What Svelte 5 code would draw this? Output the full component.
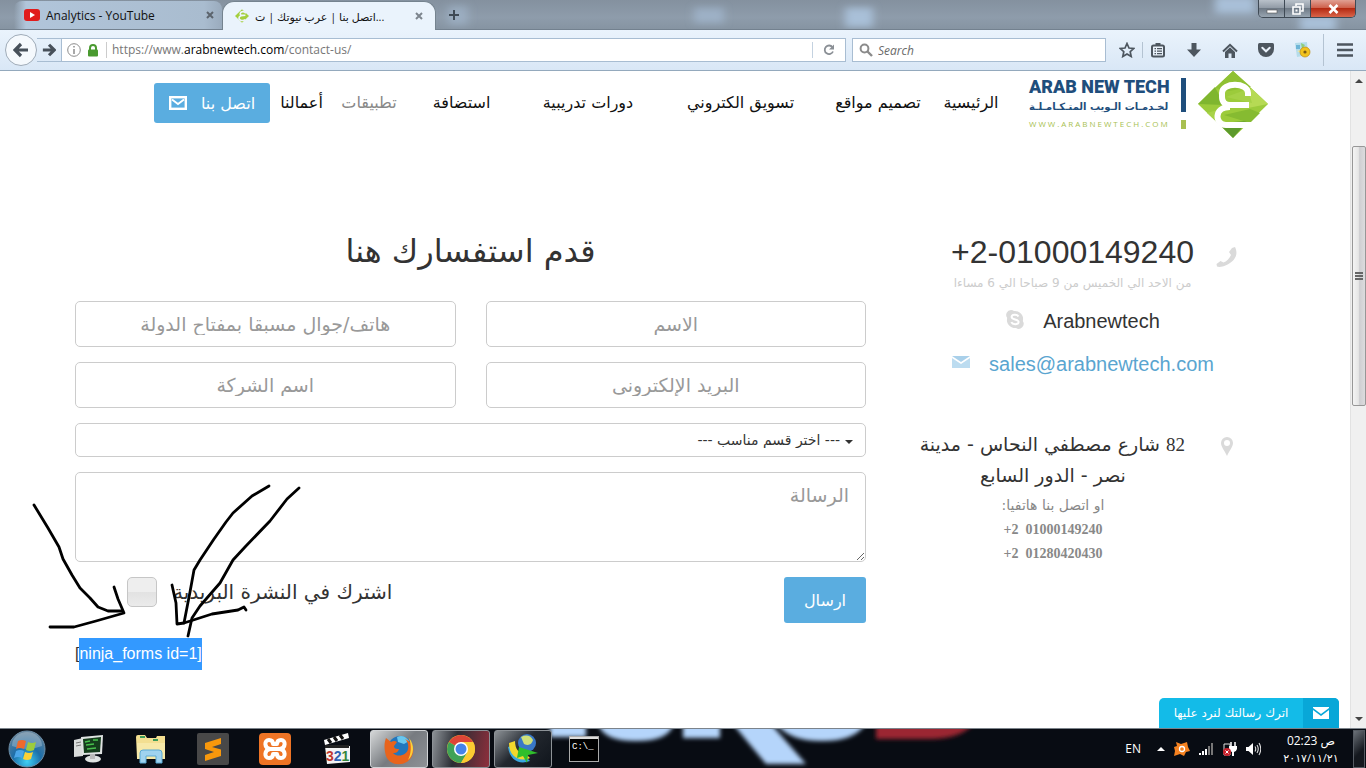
<script>
  const nav = ['الرئيسية', 'تصميم مواقع', 'تسويق الكتروني', 'دورات تدريبية', 'استضافة', 'تطبيقات', 'أعمالنا'];
  const muted = 'تطبيقات';
</script>

<div class="screen">
  <div class="tabstrip">
    <svg class="wall" viewBox="0 0 1366 30" preserveAspectRatio="none" aria-hidden="true">
      <g filter="url(#soft)" fill="#a9c0d8">
        <rect x="448" y="6" width="20" height="20" opacity=".5" />
        <rect x="694" y="8" width="30" height="16" opacity=".6" />
        <rect x="845" y="8" width="28" height="20" />
        <rect x="1215" y="-4" width="40" height="18" />
        <rect x="1300" y="16" width="36" height="16" />
      </g>
      <defs><filter id="soft"><feGaussianBlur stdDeviation="4" /></filter></defs>
    </svg>
    <div class="tab back">
      <svg width="16" height="12" viewBox="0 0 16 12"><rect width="16" height="12" rx="3" fill="#e11b1b" /><path d="M6 3v6l5-3z" fill="#fff" /></svg>
      <span class="ttl">Analytics - YouTube</span>
      <button class="x" aria-label="Close tab"><svg width="8" height="8" viewBox="0 0 8 8"><path d="M1 1l6 6M7 1L1 7" stroke="#5c646d" stroke-width="2" /></svg></button>
    </div>
    <div class="tab front">
      <svg width="14" height="14" viewBox="0 0 70 68"><path d="M35 0L70 34 35 68 0 34z" fill="#a4cf3e" /><path d="M54 20C46 8 28 10 26 22s18 8 26 8c-22 0-32 6-32 14 0 14 22 16 32 8" fill="none" stroke="#eef5fd" stroke-width="8" /></svg>
      <span class="ttl" dir="rtl">...اتصل بنا | عرب نيوتك | ت</span>
      <button class="x" aria-label="Close tab"><svg width="8" height="8" viewBox="0 0 8 8"><path d="M1 1l6 6M7 1L1 7" stroke="#7d858e" stroke-width="2" /></svg></button>
    </div>
    <button class="plus" aria-label="New tab"><svg width="10" height="10" viewBox="0 0 10 10"><path d="M5 0v10M0 5h10" stroke="#3f4a55" stroke-width="2" /></svg></button>
    <div class="winbtns">
      <button aria-label="Minimize"><svg width="12" height="12" viewBox="0 0 12 12"><rect x="1" y="7" width="10" height="3" fill="#fff" stroke="#555" stroke-width=".6" /></svg></button>
      <button aria-label="Restore"><svg width="12" height="12" viewBox="0 0 12 12"><path d="M4 3V1h7v7H9M1 4h7v7H1z" fill="none" stroke="#fff" stroke-width="1.600" /><path d="M3.500 6.500h2v2h-2z" fill="#fff" /></svg></button>
      <button class="close" aria-label="Close"><svg width="11" height="10" viewBox="0 0 11 10"><path d="M1.500 1l8 8M9.500 1l-8 8" stroke="#fff" stroke-width="2.600" /></svg></button>
    </div>
  </div>

  <div class="toolbar">
    <div class="navbtns">
      <button class="bk" aria-label="Back"><svg width="16" height="16" viewBox="0 0 16 16"><path d="M8 2L2 8l6 6M2.500 8H15" fill="none" stroke="#47505a" stroke-width="3.200" /></svg></button>
      <button class="fw" aria-label="Forward"><svg width="14" height="14" viewBox="0 0 16 16"><path d="M8 2l6 6-6 6M13.500 8H1" fill="none" stroke="#47505a" stroke-width="3.600" /></svg></button>
    </div>
    <div class="url">
      <svg width="14" height="14" viewBox="0 0 14 14"><circle cx="7" cy="7" r="6.300" fill="none" stroke="#8c8c8c" /><path d="M7 6v5M7 3v1.600" stroke="#8c8c8c" stroke-width="1.500" /></svg>
      <svg class="lock" width="12" height="13" viewBox="0 0 12 13"><path d="M3 7V4a3 3 0 016 0v3" fill="none" stroke="#4a9a30" stroke-width="2" /><rect x="1" y="5.500" width="10" height="7" rx="1" fill="#4a9a30" /></svg>
      <div class="addr" role="textbox" tabindex="0" aria-label="Address">https://www.<b>arabnewtech.com</b>/contact-us/</div>
      <button class="reload" aria-label="Reload"><svg width="12" height="12" viewBox="0 0 12 12"><path d="M9.500 3.200A4.300 4.300 0 1010 7.500" fill="none" stroke="#8a8f95" stroke-width="1.800" /><path d="M11 .5v5H6z" fill="#8a8f95" /></svg></button>
    </div>
    <div class="search">
      <svg width="14" height="14" viewBox="0 0 14 14"><circle cx="5.500" cy="5.500" r="3.900" fill="none" stroke="#8b8b8b" stroke-width="2" /><path d="M8.500 8.500l4.500 4.500" stroke="#8b8b8b" stroke-width="2.400" /></svg>
      <input type="search" placeholder="Search" aria-label="Search" />
    </div>
    <div class="tools">
      <button aria-label="Bookmark"><svg width="16" height="16" viewBox="0 0 16 16"><path d="M8 1.500l2 4.500 4.700.5-3.500 3.200 1 4.800L8 12l-4.200 2.500 1-4.800L1.300 6.500 6 6z" fill="none" stroke="#4d565f" stroke-width="1.700" /></svg></button>
      <i></i>
      <button aria-label="Bookmarks list"><svg width="14" height="16" viewBox="0 0 14 16"><rect x="1" y="3.500" width="12" height="11" rx="1.500" fill="#eaf2fb" stroke="#4d565f" stroke-width="2" /><path d="M4.500 1h5v3h-5z" fill="#4d565f" /><path d="M3.500 6.700h1.500M6 6.700h5M3.500 9.200h1.500M6 9.200h5M3.500 11.700h1.500M6 11.700h5" stroke="#4d565f" stroke-width="1.200" /></svg></button>
      <button aria-label="Downloads"><svg width="14" height="14" viewBox="0 0 14 14"><path d="M4.500 0h5v6.500H14L7 14 0 6.500h4.500z" fill="#4d565f" /></svg></button>
      <button aria-label="Home"><svg width="16" height="15" viewBox="0 0 16 15"><path d="M1 8.500L8 1.800l7 6.700" fill="none" stroke="#4d565f" stroke-width="2" /><path d="M3 9l5-4.700L13 9v6H9.500v-4.500h-3V15H3z" fill="#4d565f" /></svg></button>
      <button aria-label="Pocket"><svg width="16" height="14" viewBox="0 0 16 14"><path d="M1.500 0h13Q16 0 16 1.500V6a8 8 0 01-16 0V1.500Q0 0 1.500 0z" fill="#4d565f" /><path d="M4.300 4.800L8 8.300l3.700-3.500" fill="none" stroke="#eaf2fb" stroke-width="2" stroke-linecap="round" /></svg></button>
      <button aria-label="Add-on"><svg width="18" height="18" viewBox="0 0 18 18"><path d="M2 2l12-1 1 13-11 2z" fill="#b5dcea" /><path d="M3 4h4v4H3z" fill="#6eb5d6" /><path d="M8 2l4 2-3 4z" fill="#8fce7a" /><path d="M4 10l5-1 1 4z" fill="#f2e9a0" /><circle cx="12" cy="11" r="5" fill="#f2c31d" stroke="#b98a13" stroke-width=".7" /><circle cx="12" cy="11" r="1.600" fill="#7b5b12" /></svg></button>
      <i class="tall"></i>
      <button aria-label="Menu"><svg width="16" height="14" viewBox="0 0 16 14"><path d="M0 1.500h16M0 7h16M0 12.500h16" stroke="#4d565f" stroke-width="2.600" /></svg></button>
    </div>
  </div>

  <div class="view">
    <div class="page" dir="rtl">
      <header>
        <a class="logo" href="#home" aria-label="ARAB NEW TECH">
          <svg width="70" height="68" viewBox="0 0 70 68">
            <path d="M35 0L70 33 35 67 0 33z" fill="#9ccb3b" />
            <path d="M35 0l18 16-22 4-14-3z" fill="#8fc133" /><path d="M0 33l17-17 9 18z" fill="#7fb62f" /><path d="M53 17l17 16-20 4z" fill="#b6da54" />
            <path d="M35 67L20 52l30-2z" fill="#5d9a2c" /><path d="M9 42l11 10 3-14z" fill="#a8d348" /><path d="M28 26l22-8 4 14z" fill="#a6d147" /><path d="M26 44l26-6 10 4-10 10z" fill="#86bb31" />
            <path d="M50 25V22C50 11 24 11 24 22v4c0 5 3 8 8 8h19M32 36C15 36 17 54 28 54h32" fill="none" stroke="#fff" stroke-width="6" />
          </svg>
          <span class="bars"><i></i><i></i></span>
          <span class="words">
            <strong dir="ltr">ARAB NEW TECH</strong>
            <em>لخـدمـات الـويب المتـكـامـلـة</em>
            <small dir="ltr">WWW.ARABNEWTECH.COM</small>
          </span>
        </a>
        <nav>
          {#each nav as item}
            <a href="#{item}" class:muted={item === muted}>{item}</a>
          {/each}
        </nav>
        <a class="cta" href="#contact">اتصل بنا
          <svg width="18" height="14" viewBox="0 0 18 14"><rect x="1.200" y="1.200" width="15.600" height="11.600" fill="none" stroke="#fff" stroke-width="2.400" /><path d="M3 3.500l6 4.500 6-4.500" fill="none" stroke="#fff" stroke-width="1.800" /></svg>
        </a>
      </header>

      <main>
        <aside>
          <section class="phone">
            <svg width="21" height="21" viewBox="0 0 21 21"><path d="M16 1l3-1c3 6 1 11-3 14.500S5 21 1 19.500L.5 17l4-3 3 1.500c3-1 6-4 7.500-7.500L13 5z" fill="#dadada" /></svg>
            <div>
              <p class="num" dir="ltr">+2-01000149240</p>
              <p class="hours">من الاحد الي الخميس من 9 صباحا الي 6 مساءا</p>
            </div>
          </section>
          <p class="line" dir="ltr">
            <svg width="18" height="19" viewBox="0 0 18 19"><path d="M5 0a5 5 0 013 1 8 8 0 018.800 10A5 5 0 0110 18 8 8 0 011.200 8 5 5 0 015 0z" fill="#dadada" /><path d="M12.500 6.500C11 4 5.600 4.400 5.600 7c0 3.200 7 1.700 7 5 0 2.700-6 3-7.300.2" fill="none" stroke="#fff" stroke-width="2" /></svg>
            Arabnewtech
          </p>
          <p class="line mail" dir="ltr">
            <svg width="18" height="12" viewBox="0 0 18 12"><path d="M0 0h18L9 6z" fill="#a9d0ea" /><path d="M0 2l9 6 9-6v10H0z" fill="#bcdcf0" /></svg>
            <a href="mailto:sales@arabnewtech.com">sales@arabnewtech.com</a>
          </p>
          <section class="place">
            <svg width="12" height="19" viewBox="0 0 12 19"><path fill-rule="evenodd" d="M6 0a6 6 0 016 6c0 4-4 8-6 13C4 14 0 10 0 6a6 6 0 016-6zm0 3a3 3 0 100 6 3 3 0 000-6z" fill="#dadada" /></svg>
            <div>
              <p class="street"><span>82</span> شارع مصطفي النحاس - مدينة<br />نصر - الدور السابع</p>
              <p class="or">او اتصل بنا هاتفيا:</p>
              <p class="tel" dir="ltr">+2  01000149240</p>
              <p class="tel" dir="ltr">+2  01280420430</p>
            </div>
          </section>
        </aside>

        <div class="ask">
          <h1>قدم استفسارك هنا</h1>
          <form>
            <input type="text" placeholder="الاسم" aria-label="الاسم" />
            <input type="tel" dir="rtl" placeholder="هاتف/جوال مسبقا بمفتاح الدولة" aria-label="هاتف/جوال" />
            <input type="email" dir="rtl" placeholder="البريد الإلكترونى" aria-label="البريد الإلكترونى" />
            <input type="text" placeholder="اسم الشركة" aria-label="اسم الشركة" />
            <div class="sel">
              <select aria-label="اختر قسم مناسب"><option>--- اختر قسم مناسب ---</option></select>
            </div>
            <textarea placeholder="الرسالة" aria-label="الرسالة"></textarea>
            <div class="foot">
              <button type="button">ارسال</button>
              <label for="news">اشترك في النشرة البريدية</label>
              <input id="news" type="checkbox" />
            </div>
          </form>
          <p class="short" dir="ltr">[<mark>ninja_forms id=1]</mark></p>
        </div>
      </main>

      <svg class="ink" width="280" height="160" viewBox="30 480 280 160" aria-hidden="true">
        <g fill="none" stroke="#000" stroke-width="2.800" stroke-linecap="round" stroke-linejoin="round">
          <path d="M34 505l14 23 11 19 4 12 9 16 8 13 10 10 8 9 10 4h14" />
          <path d="M114 587l4 12 6 14-28 8-22 6H50" />
          <path d="M269 486l-17 10-19 17-7 9-12 17-14 21-6 10-4 22-6 31" />
          <path d="M299 488l-12 11-17 22-25 26-12 13-13 23-20 23-8 12-4 18" />
          <path d="M172 585l4 18 1 21 7-1 28-9 26-4 6-3 2 3" />
        </g>
      </svg>

      <button class="chat">
        <span class="env"><svg width="16" height="12" viewBox="0 0 16 12"><path d="M0 0h16v1L8 7 0 1z" fill="#fff" /><path d="M0 3l8 6 8-6v9H0z" fill="#fff" /></svg></span>
        <span class="msg">اترك رسالتك لنرد عليها</span>
      </button>
    </div>
    <div class="scroll" aria-hidden="true">
      <svg width="8" height="4" viewBox="0 0 8 4"><path d="M0 4l4-4 4 4z" fill="#444" /></svg>
      <div class="thumb"><i></i><i></i><i></i></div>
      <svg class="dn" width="8" height="4" viewBox="0 0 8 4"><path d="M0 0l4 4 4-4z" fill="#444" /></svg>
    </div>
  </div>

  <div class="taskbar">
    <svg class="wall" viewBox="0 0 1366 40" preserveAspectRatio="xMinYMin slice" aria-hidden="true">
      <defs><filter id="haze" x="-5%" y="-50%" width="110%" height="200%"><feGaussianBlur stdDeviation="2" /></filter></defs>
      <g filter="url(#haze)">
        <path d="M550-6h36v14h-36zM598-6h76q-4 18-38 18T598-6zM683-6h37v15h-37zM732-6h38l36 41h-40zM776-6h90q-10 18-44 18T776-6z" fill="#b5d5fb" />
        <path d="M876-6h98q-12 16-45 16h-53z" fill="#9b2632" />
      </g>
    </svg>
    <button class="orb" aria-label="Start">
      <svg width="38" height="38" viewBox="0 0 38 38">
        <defs><radialGradient id="o" cx=".5" cy=".85" r=".8"><stop offset="0" stop-color="#3fd0f5" /><stop offset=".5" stop-color="#1d6ea8" /><stop offset="1" stop-color="#5f819b" /></radialGradient></defs>
        <circle cx="19" cy="19" r="18" fill="url(#o)" stroke="#6e8ea6" />
        <path d="M4 16a15 14 0 0130 0q-15 6-30 0z" fill="#fff" opacity=".25" />
        <path d="M10 11q4-2 8 0l-2 8q-4-2-8 0z" fill="#ee6a2c" /><path d="M20 12q4 2 8 0l-2 8q-4 2-8 0z" fill="#9ccc3c" /><path d="M8 21q4-2 8 0l-2 7q-4-2-8 0z" fill="#4ba6e8" /><path d="M17 22q4 2 8 0l-2 7q-4 2-8 0z" fill="#fcd236" />
      </svg>
    </button>
    <div class="apps">
      <button aria-label="Remote desktop"><svg width="32" height="30" viewBox="0 0 32 30"><path d="M1 6l9-2v18l-9 1z" fill="#d9dcdb" /><path d="M3 9l5-1M3 12l5-1" stroke="#777" /><path d="M8 3l22-2-1 19-20 1z" fill="#dfe3e2" /><path d="M10 5l18-2-1 15-16 1z" fill="#153d1c" /><path d="M12 8l5-1M13 11l8-1M20 6l5 0M14 15l9-1" stroke="#48c04d" stroke-width="1.500" /><ellipse cx="20" cy="25" rx="8" ry="3.500" fill="#dfe3e2" /><path d="M17 20h5v5h-5z" fill="#bbb" /></svg></button>
      <button aria-label="Explorer"><svg width="32" height="30" viewBox="0 0 32 30"><path d="M1 3q0-2 2-2h7l2 3h9l1-2h8v22H2z" fill="#f3df91" /><path d="M2 9h28v16H2z" fill="#f7e9a8" /><path d="M5 3h5M18 6h5" stroke="#3c9b58" stroke-width="2" /><path d="M5 29V19q0-3 3-3h16q3 0 3 3v10h-6v-7H11v7z" fill="#9fd3ef" stroke="#5aa9d4" /></svg></button>
      <button aria-label="Sublime Text"><svg width="32" height="32" viewBox="0 0 32 32"><rect width="32" height="32" rx="2" fill="#484848" /><path d="M8 10l16-5v6l-9 3 9 2.500V23L8 28v-6l9-3-9-3z" fill="#f8980c" /></svg></button>
      <button aria-label="XAMPP"><svg width="32" height="32" viewBox="0 0 32 32"><rect width="32" height="32" rx="4" fill="#ee7425" /><path d="M11 16C5 15 5 7 10 7q4 0 4 4h4q0-4 4-4c5 0 5 8-1 9 6 1 6 9 1 9q-4 0-4-4h-4q0 4-4 4c-5 0-5-8 1-9h10" fill="none" stroke="#fff" stroke-width="4" stroke-linejoin="round" /></svg></button>
      <button aria-label="Media Player Classic"><svg width="30" height="32" viewBox="0 0 30 32"><path d="M2 7l24-7 1 5L3 12z" fill="#fff" /><path d="M6 6l3 4M12 4l3 4M18 2l3 4" stroke="#111" stroke-width="3" /><path d="M3 13h25v16l-23 2z" fill="#f4f4f4" /><path d="M3 12h24v3H3z" fill="#222" /><text x="4" y="28" font-family="Liberation Sans" font-weight="700" font-size="14"><tspan fill="#c4392c">3</tspan><tspan fill="#2d62b4">2</tspan><tspan fill="#37873c">1</tspan></text></svg></button>
    </div>
    <div class="open">
      <button class="on" aria-label="Firefox"><svg width="32" height="32" viewBox="0 0 32 32"><circle cx="17" cy="15" r="12" fill="#2276bd" /><path d="M14 4q7-3 12 4l-5 3-6-2z" fill="#69c7ef" /><path d="M3 5l5 4q3-2 6 0l-3 4c0 3 3 3 5 3-1 4-4 4-6 4 5 5 14 2 15-4 1-5-1-8-3-10 8 3 10 10 7 17-5 11-22 11-26 0C1 16 1 10 3 5z" fill="#e8641c" /><path d="M26 5c6 7 5 17-1 22 3-6 4-14 1-22z" fill="#fbd13b" /></svg></button>
      <button class="red" aria-label="Chrome"><svg width="30" height="30" viewBox="0 0 30 30"><circle cx="15" cy="15" r="14" fill="#fccb32" /><path d="M15 15L2.900 8A14 14 0 0127.100 8z" fill="#dd4537" /><path d="M15 15L2.900 8A14 14 0 0015 29l6-10z" fill="#3fa257" /><path d="M15 8h12.100A14 14 0 0115 29l6-10z" fill="#fccb32" /><circle cx="15" cy="15" r="7" fill="#fff" /><circle cx="15" cy="15" r="5.500" fill="#4583ea" /></svg></button>
      <button aria-label="Download Manager"><svg width="32" height="32" viewBox="0 0 32 32"><path d="M1 14c2 14 12 18 22 14l-4-4C10 25 6 20 6 12z" fill="#39a7e0" /><path d="M2 10c0 15 12 19 21 15l-4-4C12 21 8 16 8 8z" fill="#f2d82d" /><circle cx="20" cy="10" r="9" fill="#3978c8" /><path d="M14 4q8-4 12 3-2 7-9 4z" fill="#cfe07a" /><path d="M12 14l19 6-10 2-1 8-4-7-6 2z" fill="#2fbf2b" /></svg></button>
    </div>
    <button class="cmd" aria-label="Command prompt"><svg width="30" height="26" viewBox="0 0 30 26"><rect x=".5" y=".5" width="29" height="25" fill="#000" stroke="#aaa" /><path d="M1 1h28v2H1z" fill="#ddd" /><text x="3" y="13" font-family="Liberation Mono" font-size="9" fill="#fff">C:\_</text></svg></button>
    <div class="tray">
      <span class="lang">EN</span>
      <svg width="8" height="4" viewBox="0 0 8 4"><path d="M0 4l4-4 4 4z" fill="#fff" /></svg>
      <svg width="16" height="16" viewBox="0 0 16 16"><path d="M2 1l5 2 6-2 1 5 2 4-4 1-2 4-4-2-6 2 1-5-1-4 3-1z" fill="#f58220" /><circle cx="8" cy="8" r="2.500" fill="none" stroke="#fff" stroke-width="1.300" /></svg>
      <svg width="15" height="12" viewBox="0 0 15 12"><path d="M1 10v2M4 8v4M7 6v6" stroke="#fff" stroke-width="2" /><path d="M10 3v9M13 0v12" stroke="#777" stroke-width="2" /></svg>
      <svg width="14" height="16" viewBox="0 0 14 16"><path d="M1 3h6v11H1z" fill="none" stroke="#ddd" /><path d="M8 1v4M12 1v4" stroke="#fff" stroke-width="1.500" /><path d="M6 5h8v3q-1 3-3 3v4H9v-4Q6 10 6 8z" fill="#fff" /><circle cx="4" cy="11" r="4" fill="#c8202b" /><path d="M2.500 9.500l3 3M5.500 9.500l-3 3" stroke="#fff" /></svg>
      <svg width="15" height="14" viewBox="0 0 15 14"><path d="M0 5h2.500L7 1v12L2.500 9H0z" fill="#fff" /><path d="M9 4.500q1.500 2.500 0 5M11 3q2.500 4 0 8M13 1q3.500 6 0 12" fill="none" stroke="#ddd" stroke-width="1.100" /></svg>
      <div class="clock"><time dir="rtl">ص 02:23</time><time>٢٠١٧/١١/٢١</time></div>
    </div>
    <button class="peek" aria-label="Show desktop"></button>
  </div>
</div>

<style>
  :global(body) { margin: 0; }
  .screen { min-height: 100vh; display: flex; flex-direction: column; background: #fff; font-family: "DejaVu Sans", sans-serif; color: #333; overflow: hidden; }
  .screen *, .screen { box-sizing: border-box; }
  button { border: 0; padding: 0; background: none; display: flex; align-items: center; justify-content: center; font-family: inherit; }
  p, h1 { margin: 0; font-weight: 400; }
  a { text-decoration: none; color: inherit; }
  svg { display: block; flex: none; }

  .tabstrip { position: relative; display: flex; align-items: flex-end; height: 30px; background: linear-gradient(#84919f, #8e9cab 60%, #8694a2); border-bottom: 1px solid #73818f; font: 12px "Open Sans", "DejaVu Sans", sans-serif; color: #111; }
  .wall { position: absolute; inset: 0; width: 100%; height: 100%; }
  .tab { position: relative; display: flex; align-items: center; gap: 6px; height: 28px; }
  .tab.back { width: 208px; margin-left: 14px; padding: 0 0 0 10px; background: linear-gradient(90deg, transparent, #b1c5da 12px, #a9bccf 190px, #9aabbd); border-radius: 8px 8px 0 0; }
  .tab.front { width: 214px; height: 29px; margin-bottom: -1px; padding: 0 10px 0 12px; background: #eaf3fc; border-radius: 12px 12px 0 0; border: 1px solid #75838f; border-bottom: 0; }
  .tab .ttl { white-space: nowrap; }
  .tab .x { margin-left: auto; }
  .front .ttl { font-size: 11px; }
  .x { width: 12px; height: 16px; }
  .back .x { margin-right: 6px; }
  .plus { position: relative; width: 36px; height: 28px; }
  .winbtns { position: relative; display: flex; align-self: flex-start; margin: 0 10px 0 auto; border: 1px solid #3f4a55; border-top: 0; border-radius: 0 0 5px 5px; overflow: hidden; }
  .winbtns button { width: 26px; height: 17px; background: linear-gradient(#b9c1ca, #8e98a3 50%, #6f7a86 50%, #98a5b1); border-right: 1px solid #3f4a55; }
  .winbtns .close { width: 44px; border: 0; background: linear-gradient(#e0a093, #cd5b45 50%, #b42a12 50%, #d9654a); }

  .toolbar { display: flex; align-items: center; height: 41px; padding: 0 13px 0 5px; background: linear-gradient(#eaf3fc, #d9e7f6); border-bottom: 1px solid #94a9bd; font-family: "Open Sans", sans-serif; }
  .navbtns { display: flex; align-items: center; }
  .bk { width: 32px; height: 32px; border: 1px solid #9fabb8; border-radius: 50%; background: #f5f9fd; }
  .fw { width: 25px; height: 24px; border: 1px solid #a8bdd2; border-left: 0; }
  .url, .search { display: flex; align-items: center; height: 24px; background: #fff; border: 1px solid #a8bdd2; }
  .url { flex: 1; padding-left: 5px; border-left: 0; }
  .lock { margin: 0 7px 0 6px; }
  .addr { flex: 1; padding-left: 5px; border-left: 1px solid #ccc; font-size: 12px; line-height: 16px; color: #777; }
  .addr b { font-weight: 400; color: #000; }
  .reload { width: 33px; height: 16px; border-left: 1px solid #c4d2e0; }
  .search { width: 254px; margin-left: 6px; padding: 0 6px; gap: 5px; }
  .search input { flex: 1; min-width: 0; border: 0; padding: 0; outline: 0; background: none; font: italic 12px "Open Sans", sans-serif; }
  .search input::placeholder { color: #6a6a6a; }
  .tools { display: flex; align-items: center; margin-left: 13px; gap: 20px; }
  .tools button { width: 16px; }
  .tools i { width: 1px; height: 16px; background: #b4c3d2; margin: 0 -13px; }
  .tools i.tall { height: 32px; margin: 0 -7px; }

  .view { flex: 1; display: flex; }
  .page { position: relative; flex: 1; background: #fff; }
  .scroll { width: 16px; display: flex; flex-direction: column; align-items: center; padding: 8px 0 7px; background: #f0f0f0; border-left: 1px solid #e2e2e2; }
  .thumb { display: flex; flex-direction: column; align-items: center; justify-content: center; gap: 1px; width: 14px; height: 260px; margin-top: 63px; border: 1px solid #979797; border-radius: 2px; background: linear-gradient(90deg, #f4f4f4, #e6e6e6 45%, #cfcfd2 55%, #dcdcde); }
  .thumb i { width: 8px; height: 2px; background: #666; }
  .dn { margin-top: auto; }

  header { display: flex; align-items: flex-start; height: 67px; padding-right: 82px; }
  .logo { display: flex; width: 259px; }
  .bars { display: flex; flex-direction: column; gap: 8px; margin: 7px 12px 0 12px; }
  .bars i { width: 5px; height: 34px; background: #1f4e7c; }
  .bars i + i { height: 9px; background: #a8bf50; }
  .words { display: flex; flex-direction: column; width: 140px; text-align: left; white-space: nowrap; color: #1f4e7c; }
  .words strong { margin-top: 4px; font: 900 18px/24px Roboto, sans-serif; }
  .words em { font: 700 10px/16px "DejaVu Sans", sans-serif; }
  .words small { margin-top: 3px; font: 8px/12px "Open Sans", sans-serif; letter-spacing: 2px; color: #a8bf50; }
  nav { display: grid; grid-template-columns: 76px 110px 165px 140px 113px 72px 63px; padding-top: 12px; text-align: center; font-size: 16px; line-height: 40px; white-space: nowrap; color: #111; }
  nav .muted { color: #888; }
  .cta { display: flex; align-items: center; justify-content: center; gap: 14px; width: 116px; height: 40px; margin-top: 12px; border-radius: 3px; background: #5aade0; color: #fff; font-size: 16px; }

  main { display: grid; grid-template-columns: 379fr 791fr; gap: 30px; padding: 93px 75px 0; }
  .phone { display: flex; gap: 22px; padding-right: 38px; text-align: center; }
  .phone svg { margin-top: 16px; }
  .num { font: 32px/42px "Liberation Sans", sans-serif; }
  .hours { font-size: 12px; line-height: 20px; color: #ccc; white-space: nowrap; }
  .line { display: flex; align-items: center; justify-content: center; gap: 19px; height: 30px; margin-top: 13px; padding-right: 5px; font: 20px/30px "Liberation Sans", sans-serif; }
  .line svg { margin-bottom: 4px; }
  .mail { color: #5aa5d0; }
  .place { display: flex; gap: 36px; margin-top: 50px; padding-right: 42px; text-align: center; }
  .place svg { margin-top: 8px; }
  .place div { width: 264px; }
  .street { font-size: 19px; line-height: 31px; white-space: nowrap; }
  .street span { font-family: "Liberation Serif", serif; }
  .or { margin-top: 2px; font-size: 14px; line-height: 25px; color: #888; }
  .tel { font: 700 14px/24px "Liberation Serif", serif; color: #888; white-space: pre; }

  h1 { font-size: 32px; line-height: 40px; text-align: center; }
  form { display: grid; grid-template-columns: 1fr 1fr; gap: 15px 30px; margin-top: 30px; }
  form > input, textarea, select { width: 100%; border: 1px solid #ccc; border-radius: 5px; background: #fff; font-family: inherit; color: #555; }
  form > input { height: 46px; padding: 0 16px; font-size: 19px; line-height: 40px; text-align: center; }
  form > input::placeholder { line-height: 40px; }
  form ::placeholder { color: #999; opacity: 1; }
  .sel, textarea, .foot { grid-column: 1 / -1; }
  .sel { position: relative; height: 34px; }
  .sel::after { content: ""; position: absolute; right: 13px; top: 17px; border: 4px solid transparent; border-top-color: #333; border-bottom: 0; }
  select { height: 34px; padding: 0 25px; appearance: none; font-size: 14px; color: #333; }
  textarea { display: block; height: 90px; padding: 8px 16px; font-size: 19px; line-height: 28px; direction: ltr; text-align: right; resize: vertical; }
  .foot { display: flex; align-items: flex-start; }
  .foot button { width: 82px; height: 46px; border-radius: 3px; background: #5aade0; color: #fff; font-size: 16px; }
  .foot label { margin-right: auto; font-size: 20px; line-height: 30px; white-space: nowrap; }
  .foot input { appearance: none; width: 30px; height: 30px; margin: 0 16px 0 52px; border: 1px solid #c6c6c6; border-radius: 5px; background: linear-gradient(#eee 50%, #e2e2e2 50%, #ebebeb); }
  .short { margin-top: 15px; font: 16px/32px "Liberation Sans", sans-serif; }
  mark { display: inline-block; background: #3399ff; color: #fff; }
  .ink { position: absolute; left: 30px; top: 409px; pointer-events: none; }
  .chat { position: absolute; right: 11px; bottom: 0; width: 180px; height: 30px; border-radius: 5px 5px 0 0; background: #13bbe8; color: #fff; overflow: hidden; }
  .env { display: flex; align-items: center; justify-content: center; width: 36px; height: 30px; background: #08a7d8; }
  .msg { flex: 1; font-size: 12px; line-height: 30px; white-space: nowrap; }

  .taskbar { position: relative; display: flex; align-items: center; height: 40px; background: #080c13; border-top: 1px solid #7b838b; overflow: hidden; color: #fff; }
  .taskbar > :not(.wall) { position: relative; }
  .orb { margin-left: 8px; }
  .apps { display: flex; margin-left: 12px; }
  .apps button { width: 62px; }
  .open { display: flex; gap: 4px; margin-left: 2px; }
  .open button { width: 58px; height: 38px; border: 1px solid #8d9297; border-radius: 3px; background: linear-gradient(135deg, #8c9196, #23282f 45%, #10151c); }
  .open .on { border-color: #d0d3d6; background: linear-gradient(135deg, #d5d7d8, #777b80 50%, #8e9296); }
  .open .red { background: linear-gradient(100deg, #8c9196, #2a2d34 40%, #8f2f3c); }
  .cmd { margin-left: 17px; }
  .tray { display: flex; align-items: center; gap: 9px; margin-left: auto; }
  .lang { margin-right: 7px; font: 12px "Open Sans", sans-serif; }
  .clock { display: flex; flex-direction: column; align-items: center; width: 60px; margin: 0 12px 0 11px; font: 12px/17px "Open Sans", "DejaVu Sans", sans-serif; white-space: nowrap; }
  .clock time + time { font-size: 11px; }
  .peek { width: 12px; height: 38px; margin-right: 1px; border: 1px solid #555b62; background: linear-gradient(135deg, #6b7178, #14181e 60%); }
</style>
